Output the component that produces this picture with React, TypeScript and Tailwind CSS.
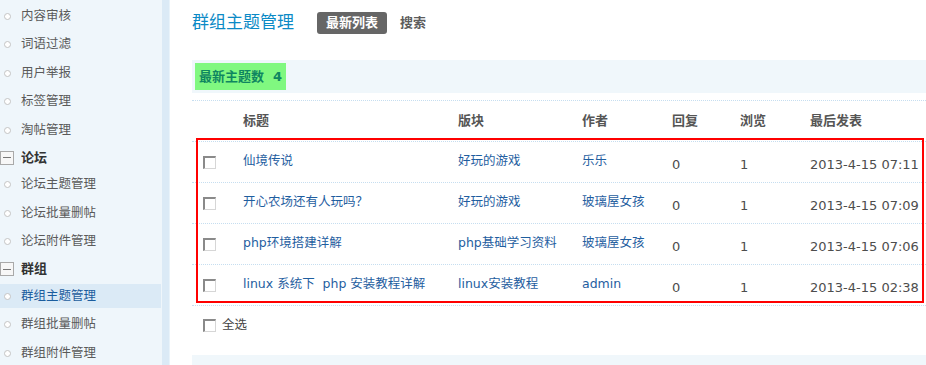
import React from "react";

type SideItem = { type: "item" | "section"; label: string; active?: boolean };

const sideItems: SideItem[] = [
  { type: "item", label: "内容审核" },
  { type: "item", label: "词语过滤" },
  { type: "item", label: "用户举报" },
  { type: "item", label: "标签管理" },
  { type: "item", label: "淘帖管理" },
  { type: "section", label: "论坛" },
  { type: "item", label: "论坛主题管理" },
  { type: "item", label: "论坛批量删帖" },
  { type: "item", label: "论坛附件管理" },
  { type: "section", label: "群组" },
  { type: "item", label: "群组主题管理", active: true },
  { type: "item", label: "群组批量删帖" },
  { type: "item", label: "群组附件管理" },
];

const threads = [
  { title: "仙境传说", forum: "好玩的游戏", author: "乐乐", reply: 0, view: 1, last: "2013-4-15 07:11" },
  { title: "开心农场还有人玩吗？", forum: "好玩的游戏", author: "玻璃屋女孩", reply: 0, view: 1, last: "2013-4-15 07:09" },
  { title: "php环境搭建详解", forum: "php基础学习资料", author: "玻璃屋女孩", reply: 0, view: 1, last: "2013-4-15 07:06" },
  { title: "linux 系统下\u00a0 php 安装教程详解", forum: "linux安装教程", author: "admin", reply: 0, view: 1, last: "2013-4-15 02:38" },
];

function Checkbox() {
  return (
    <span className="block w-[13px] h-[13px] bg-white border-t-2 border-l-2 border-b border-r border-t-[#8a8a8a] border-l-[#8a8a8a] border-b-[#d6d6d6] border-r-[#d6d6d6]" />
  );
}

function Sidebar() {
  return (
    <div className="w-[162px] shrink-0 bg-[#eff6fb] pt-[2px]">
      {sideItems.map((item) =>
        item.type === "section" ? (
          <div key={item.label} className="h-[26px] flex items-center">
            <span className="w-[14px] h-[14px] border border-[#a9a9a9] bg-[#f7f7f7] flex items-center justify-center">
              <span className="block w-[8px] h-[1px] bg-[#777]" />
            </span>
            <span className="ml-[7px] text-[13px] font-bold text-[#333]">{item.label}</span>
          </div>
        ) : (
          <div key={item.label} className="h-[28.5px] flex items-center">
            <div
              className={`h-[24px] w-[161px] flex items-center ${
                item.active ? "bg-[#dbeaf6]" : ""
              }`}
            >
              <span className="ml-[4px] w-[7px] h-[7px] rounded-full border border-[#c4c4c4] bg-white" />
              <span
                className={`ml-[10px] text-[12.5px] ${
                  item.active ? "text-[#1b5d9e]" : "text-[#5a5a5a]"
                }`}
              >
                {item.label}
              </span>
            </div>
          </div>
        )
      )}
    </div>
  );
}

export default function App() {
  return (
    <div className="w-[926px] h-[365px] overflow-hidden flex bg-white font-['DejaVu_Sans','Noto_Sans_CJK_SC',sans-serif]">
      <Sidebar />
      <div className="w-[8px] shrink-0 bg-[#dbeaf6] border-r border-[#e9f3fa]" />

      {/* main */}
      <div className="flex-1 flex flex-col">
        <div className="h-[3px] bg-[#f3f8fc]" />
        <div className="pl-[22px] pt-[3px]">
          {/* title row */}
          <div className="h-[40px] flex items-center">
            <h1 className="text-[17px] text-[#0b8ac6] font-normal">群组主题管理</h1>
            <span className="ml-[23px] h-[22px] px-[9px] rounded-[3px] bg-[#666] text-white text-[13px] font-bold flex items-center">
              最新列表
            </span>
            <span className="ml-[13px] text-[13px] font-bold text-[#5c5c5c]">搜索</span>
          </div>

          {/* count band */}
          <div className="mt-[17px] h-[33px] bg-[#f0f7fb] pl-[3px] flex items-center">
            <span className="h-[27px] px-[4px] bg-[#80f880] text-[13px] font-bold text-[#0f8660] flex items-center">
              最新主题数&nbsp; 4
            </span>
          </div>

          {/* table */}
          <div className="mt-[7px]">
            <div className="h-[42px] border-t border-b border-dotted border-[#c6def0] flex items-center text-[13px] font-bold text-[#555]">
              <div className="w-[51px]" />
              <div className="w-[215px]">标题</div>
              <div className="w-[124px]">版块</div>
              <div className="w-[90px]">作者</div>
              <div className="w-[68px]">回复</div>
              <div className="w-[70px]">浏览</div>
              <div className="flex-1">最后发表</div>
            </div>

            <div className="relative">
              {threads.map((t) => (
                <div
                  key={t.last}
                  className="h-[41px] border-b border-dotted border-[#c6def0] flex items-center"
                >
                  <div className="w-[51px] pl-[11px]">
                    <Checkbox />
                  </div>
                  <div className="w-[215px] pb-[2px] text-[12.5px] text-[#1f5e9f] whitespace-nowrap">{t.title}</div>
                  <div className="w-[124px] pb-[2px] text-[12.5px] text-[#1f5e9f] whitespace-nowrap">{t.forum}</div>
                  <div className="w-[90px] pb-[2px] text-[12.5px] text-[#1f5e9f] whitespace-nowrap">{t.author}</div>
                  <div className="w-[68px] pt-[6px] text-[13px] text-[#4d4d4d]">{t.reply}</div>
                  <div className="w-[70px] pt-[6px] text-[13px] text-[#4d4d4d]">{t.view}</div>
                  <div className="flex-1 pt-[6px] text-[13px] text-[#4d4d4d] whitespace-nowrap">{t.last}</div>
                </div>
              ))}
              {/* red annotation box */}
              <div className="absolute -top-[4px] left-[4px] right-[2px] h-[165px] border-2 border-[#ff0000] pointer-events-none" />
            </div>

            <div className="h-[39px] flex items-center pl-[11px]">
              <Checkbox />
              <span className="ml-[6px] text-[12.5px] text-[#444]">全选</span>
            </div>
          </div>

          <div className="mt-[10px] h-[40px] bg-[#f0f7fb]" />
        </div>
      </div>
    </div>
  );
}
